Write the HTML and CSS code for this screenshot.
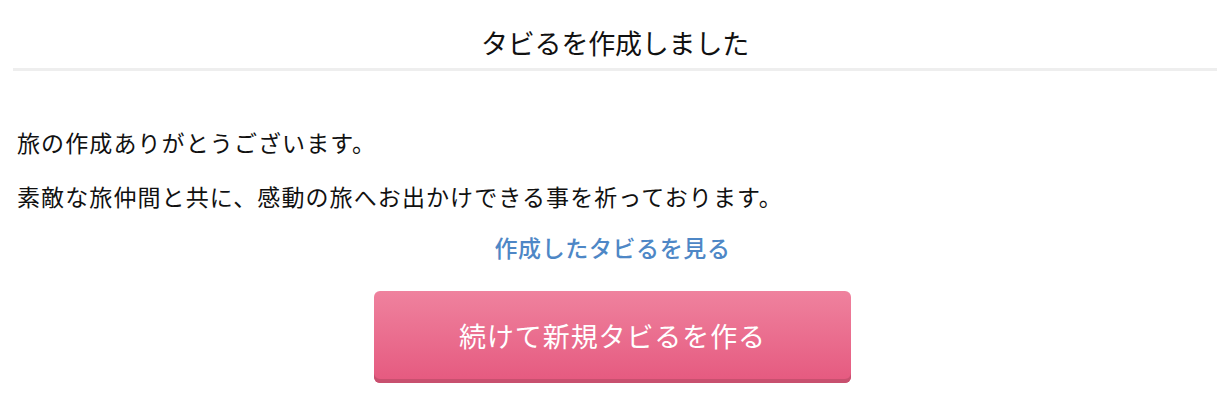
FILE: index.html
```html
<!DOCTYPE html>
<html lang="ja">
<head>
<meta charset="utf-8">
<link rel="stylesheet" href="styles.css">
</head>
<body>
<header class="header">
  <h1 class="title">タビるを作成しました</h1>
</header>
<main class="content">
  <p class="msg">旅の作成ありがとうございます。</p>
  <p class="msg">素敵な旅仲間と共に、感動の旅へお出かけできる事を祈っております。</p>
  <div class="link-row"><a class="link" href="#">作成したタビるを見る</a></div>
  <div class="btn-row"><a class="btn" href="#">続けて新規タビるを作る</a></div>
</main>
</body>
</html>
```

FILE: styles.css
```css
html, body {
  margin: 0;
  padding: 0;
  background: #fff;
}
body {
  font-family: "Noto Sans CJK JP", "Noto Sans", sans-serif;
  color: #111;
}
.header {
  margin: 0 3px 0 13px;
  border-bottom: 3px solid #eeeeee;
  height: 68px;
  display: flex;
  align-items: center;
  justify-content: center;
}
.title {
  margin: 0;
  padding-top: 16px;
  font-size: 27px;
  font-weight: 400;
  letter-spacing: -0.2px;
  line-height: 1;
}
.content {
  padding: 0 12px 0 17px;
}
.msg {
  margin: 0;
  font-size: 23px;
  letter-spacing: 1.1px;
  line-height: 1;
}
.msg:first-child {
  margin-top: 60px;
}
.msg + .msg {
  margin-top: 31px;
}
.link-row {
  display: flex;
  justify-content: center;
  margin-top: 28px;
}
.link {
  color: #4e87c6;
  text-decoration: none;
  font-size: 23px;
  font-weight: 500;
  letter-spacing: 0.6px;
  line-height: 1;
}
.btn-row {
  display: flex;
  justify-content: center;
  margin-top: 32px;
}
.btn {
  box-sizing: border-box;
  width: 477px;
  height: 92px;
  border-radius: 6px;
  background: linear-gradient(#ef829e, #e5597f);
  box-shadow: inset 0 -4px 0 #c8506f;
  padding-bottom: 4px;
  display: flex;
  align-items: center;
  justify-content: center;
  color: #fff;
  text-decoration: none;
  font-size: 27px;
  letter-spacing: 0.9px;
  line-height: 1;
}
```
